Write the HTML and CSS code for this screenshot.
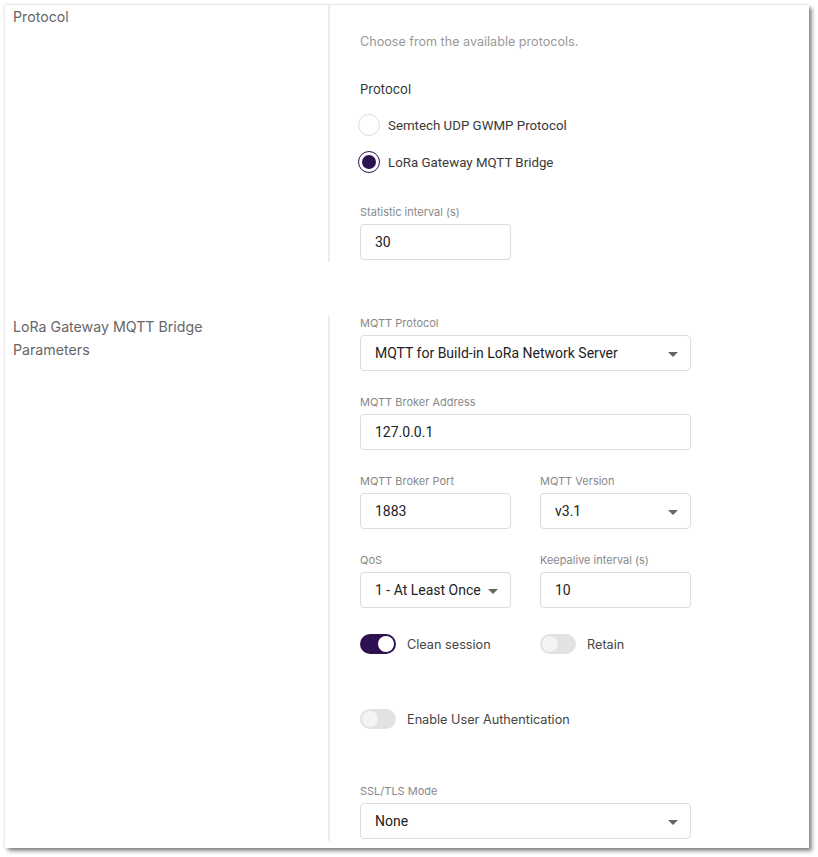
FILE: index.html
```html
<!DOCTYPE html>
<html>
<head>
<meta charset="utf-8">
<link rel="stylesheet" href="styles.css">
</head>
<body>
<div class="panel">
  <section class="sec sec-first">
    <div class="sec-title">Protocol</div>
    <div class="sec-body body-first">
      <div class="desc">Choose from the available protocols.</div>
      <div class="group-title">Protocol</div>
      <div class="radios">
        <label class="radio"><span class="dot"></span><span class="rtext">Semtech UDP GWMP Protocol</span></label>
        <label class="radio checked"><span class="dot"></span><span class="rtext">LoRa Gateway MQTT Bridge</span></label>
      </div>
      <div class="field stat">
        <div class="flabel">Statistic interval (s)</div>
        <div class="input narrow">30</div>
      </div>
    </div>
  </section>

  <section class="sec sec-second">
    <div class="sec-title wrap">LoRa Gateway MQTT Bridge Parameters</div>
    <div class="sec-body">
      <div class="field">
        <div class="flabel">MQTT Protocol</div>
        <div class="input select">MQTT for Build-in LoRa Network Server<span class="caret"></span></div>
      </div>
      <div class="field">
        <div class="flabel">MQTT Broker Address</div>
        <div class="input">127.0.0.1</div>
      </div>
      <div class="pair">
        <div class="field">
          <div class="flabel">MQTT Broker Port</div>
          <div class="input">1883</div>
        </div>
        <div class="field">
          <div class="flabel">MQTT Version</div>
          <div class="input select">v3.1<span class="caret"></span></div>
        </div>
      </div>
      <div class="pair">
        <div class="field">
          <div class="flabel">QoS</div>
          <div class="input select">1 - At Least Once<span class="caret"></span></div>
        </div>
        <div class="field">
          <div class="flabel">Keepalive interval (s)</div>
          <div class="input">10</div>
        </div>
      </div>
      <div class="pair toggles">
        <div class="tgl on"><span class="track"><span class="knob"></span></span><span class="ttext">Clean session</span></div>
        <div class="tgl"><span class="track"><span class="knob"></span></span><span class="ttext">Retain</span></div>
      </div>
      <div class="tgl auth"><span class="track"><span class="knob"></span></span><span class="ttext">Enable User Authentication</span></div>
      <div class="field last">
        <div class="flabel">SSL/TLS Mode</div>
        <div class="input select">None<span class="caret"></span></div>
      </div>
    </div>
  </section>
</div>
</body>
</html>
```

FILE: styles.css
```css
* { box-sizing: border-box; }
html, body { margin: 0; padding: 0; background: #ffffff; }
body {
  font-family: Inter, "Liberation Sans", sans-serif;
  width: 818px;
  height: 857px;
  overflow: hidden;
}
.panel {
  margin: 5px 0 0 5px;
  width: 804px;
  height: 843px;
  background: #fff;
  box-shadow: 0 0 3px rgba(0,0,0,0.18), 3px 3px 4px rgba(0,0,0,0.45);
  overflow: hidden;
}
.sec {
  display: grid;
  grid-template-columns: 323px 1fr;
}
.sec-second { margin-top: 54px; }
.sec-title {
  padding: 0 0 0 8px;
  font-size: 14.2px;
  line-height: 23px;
  color: #666;
}
.sec-title.wrap { max-width: 230px; margin-top: -1px; }
.sec-body {
  border-left: 2px solid #ececec;
  padding-left: 30px;
  padding-bottom: 2px;
}
.body-first { padding-top: 27px; }
.desc {
  font-size: 12.6px;
  line-height: 20px;
  color: #999;
}
.group-title {
  margin-top: 27px;
  font-size: 13px;
  line-height: 20px;
  color: #333;
}
.radios {
  margin-top: 16px;
  display: flex;
  flex-direction: column;
  gap: 17px;
}
.radio {
  display: flex;
  align-items: center;
  height: 20px;
}
.dot {
  width: 22px;
  height: 22px;
  margin-left: -2px;
  border: 1px solid #dcdcdc;
  border-radius: 50%;
  background: #fff;
  position: relative;
  flex: none;
}
.radio.checked .dot { border: 1.5px solid #2c1250; }
.radio.checked .dot::after {
  content: "";
  position: absolute;
  left: 2.5px; top: 2.5px;
  width: 14px; height: 14px;
  border-radius: 50%;
  background: #2c1250;
}
.rtext {
  margin-left: 8px;
  font-family: Roboto, "Liberation Sans", sans-serif;
  font-size: 13.3px;
  color: #3a3a3a;
}
.field { margin-bottom: 24px; }
.field.stat { margin-top: 33px; margin-bottom: 0; }
.field.last { margin-bottom: 0; }
.flabel {
  font-size: 11px;
  line-height: 14px;
  color: #888;
  margin-bottom: 5px;
}
.input {
  position: relative;
  width: 331px;
  height: 36px;
  border: 1px solid #dcdcdc;
  border-radius: 4px;
  padding-left: 14px;
  display: flex;
  align-items: center;
  font-family: Roboto, "Liberation Sans", sans-serif;
  font-size: 14px;
  color: #222;
}
.input.narrow { width: 151px; }
.pair {
  width: 331px;
  display: grid;
  grid-template-columns: 151px 151px;
  column-gap: 29px;
}
.pair .input { width: 151px; }
.caret {
  position: absolute;
  right: 12px;
  top: 16px;
  width: 0; height: 0;
  border-left: 5px solid transparent;
  border-right: 5px solid transparent;
  border-top: 5px solid #666;
}
.toggles { margin-top: 2px; }
.tgl {
  display: flex;
  align-items: center;
  height: 20px;
}
.track {
  width: 36px;
  height: 20px;
  border-radius: 10px;
  background: #e2e2e2;
  position: relative;
  flex: none;
}
.knob {
  position: absolute;
  top: 2px; left: 2px;
  width: 16px; height: 16px;
  border-radius: 50%;
  background: #f4f4f4;
}
.tgl.on .track { background: #2c1250; }
.tgl.on .knob { left: 18px; background: #fff; }
.ttext {
  margin-left: 11px;
  font-size: 12.7px;
  color: #444;
}
.tgl.auth { margin-top: 55px; margin-bottom: 55px; }
```
